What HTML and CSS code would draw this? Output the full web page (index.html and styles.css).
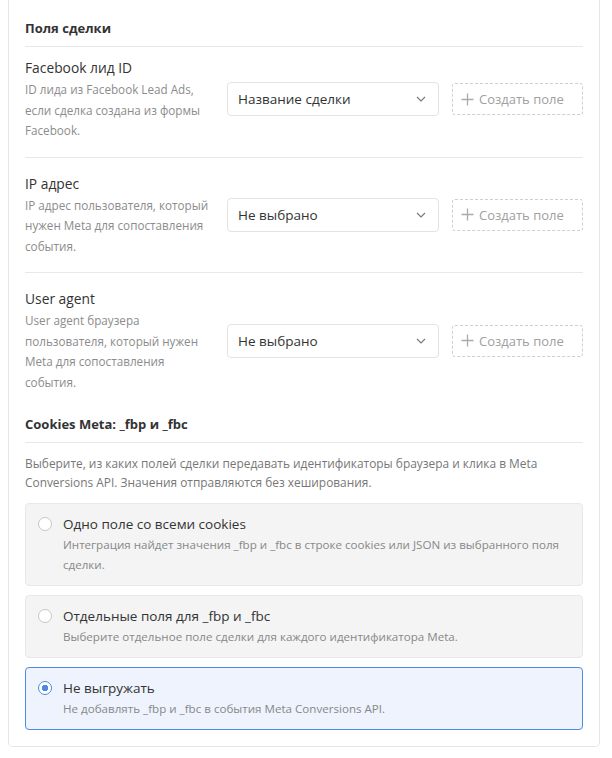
FILE: index.html
```html
<!DOCTYPE html>
<html lang="ru">
<head>
    <meta charset="UTF-8">
    <meta name="viewport" content="width=device-width, initial-scale=1.0">
    <title>Поля сделки</title>
    <link rel="stylesheet" href="styles.css">
</head>
<body>
    <div class="card">
        <h2 class="section-title">Поля сделки</h2>

        <div class="field-row">
            <div class="field-info">
                <div class="field-label">Facebook лид ID</div>
                <div class="field-desc">ID лида из Facebook Lead Ads, если сделка создана из формы Facebook.</div>
            </div>
            <div class="select">
                <span>Название сделки</span>
                <svg class="chevron" width="10" height="6" viewBox="0 0 10 6"><path d="M1 1l4 4 4-4" fill="none" stroke="#777" stroke-width="1.1"/></svg>
            </div>
            <button class="create-btn"><svg class="plus" width="13" height="13" viewBox="0 0 13 13"><path d="M6.5 0.5v12M0.5 6.5h12" stroke="#aaa" stroke-width="1.3"/></svg>Создать поле</button>
        </div>

        <div class="field-row">
            <div class="field-info">
                <div class="field-label">IP адрес</div>
                <div class="field-desc">IP адрес пользователя, который нужен Meta для сопоставления события.</div>
            </div>
            <div class="select">
                <span>Не выбрано</span>
                <svg class="chevron" width="10" height="6" viewBox="0 0 10 6"><path d="M1 1l4 4 4-4" fill="none" stroke="#777" stroke-width="1.1"/></svg>
            </div>
            <button class="create-btn"><svg class="plus" width="13" height="13" viewBox="0 0 13 13"><path d="M6.5 0.5v12M0.5 6.5h12" stroke="#aaa" stroke-width="1.3"/></svg>Создать поле</button>
        </div>

        <div class="field-row last">
            <div class="field-info">
                <div class="field-label">User agent</div>
                <div class="field-desc">User agent браузера пользователя, который нужен Meta для сопоставления события.</div>
            </div>
            <div class="select">
                <span>Не выбрано</span>
                <svg class="chevron" width="10" height="6" viewBox="0 0 10 6"><path d="M1 1l4 4 4-4" fill="none" stroke="#777" stroke-width="1.1"/></svg>
            </div>
            <button class="create-btn"><svg class="plus" width="13" height="13" viewBox="0 0 13 13"><path d="M6.5 0.5v12M0.5 6.5h12" stroke="#aaa" stroke-width="1.3"/></svg>Создать поле</button>
        </div>

        <h2 class="section-title cookies-title">Cookies Meta: _fbp и _fbc</h2>
        <p class="section-note">Выберите, из каких полей сделки передавать идентификаторы браузера и клика в Meta Conversions API. Значения отправляются без хеширования.</p>

        <div class="options">
            <label class="option">
                <span class="radio"></span>
                <span class="option-text">
                    <span class="option-title">Одно поле со всеми cookies</span>
                    <span class="option-desc">Интеграция найдет значения _fbp и _fbc в строке cookies или JSON из выбранного поля сделки.</span>
                </span>
            </label>
            <label class="option">
                <span class="radio"></span>
                <span class="option-text">
                    <span class="option-title">Отдельные поля для _fbp и _fbc</span>
                    <span class="option-desc">Выберите отдельное поле сделки для каждого идентификатора Meta.</span>
                </span>
            </label>
            <label class="option selected">
                <span class="radio"></span>
                <span class="option-text">
                    <span class="option-title">Не выгружать</span>
                    <span class="option-desc">Не добавлять _fbp и _fbc в события Meta Conversions API.</span>
                </span>
            </label>
        </div>
    </div>
</body>
</html>
```

FILE: styles.css
```css
* {
    margin: 0;
    padding: 0;
    box-sizing: border-box;
}

body {
    font-family: 'Open Sans', 'Noto Sans', sans-serif;
    background: #fff;
    color: #333;
}

.card {
    margin: 0 12px 0 8px;
    border: 1px solid #e6e6e6;
    border-top: none;
    border-radius: 0 0 5px 5px;
    padding: 18px 16px 16px;
}

.section-title {
    font-size: 13px;
    font-weight: 700;
    color: #333;
    line-height: 20px;
    padding-bottom: 8px;
    border-bottom: 1px solid #e8e8e8;
}

.field-row {
    display: grid;
    grid-template-columns: 189px 212px 131px;
    column-gap: 13px;
    align-items: center;
    padding: 11px 0 16px;
    border-bottom: 1px solid #e8e8e8;
}

.field-row + .field-row {
    padding-top: 16px;
}

.field-row.last {
    border-bottom: none;
    padding-bottom: 12px;
}

.field-label {
    font-size: 13.8px;
    line-height: 20px;
    color: #333;
}

.field-desc {
    font-size: 11.7px;
    line-height: 20.5px;
    color: #8c8c8c;
    margin-top: 1px;
}

.select {
    display: flex;
    align-items: center;
    justify-content: space-between;
    height: 34px;
    padding: 0 10px;
    border: 1px solid #e3e3e3;
    border-radius: 4px;
    background: #fff;
    font-size: 13.5px;
    color: #333;
}

.chevron {
    margin-right: 2px;
}

.create-btn {
    display: flex;
    align-items: center;
    gap: 5px;
    height: 32px;
    border: 1px dashed #cfcfcf;
    border-radius: 3px;
    background: #fff;
    font-family: inherit;
    font-size: 13px;
    color: #a0a0a0;
    padding: 0 8px;
}

.plus {
    flex: none;
}

.cookies-title {
    margin-top: 10px;
}

.section-note {
    font-size: 11.9px;
    line-height: 19px;
    color: #777;
    margin-top: 11px;
}

.options {
    display: flex;
    flex-direction: column;
    gap: 9px;
    margin-top: 11px;
}

.option {
    display: flex;
    align-items: flex-start;
    gap: 11px;
    padding: 10px 12px;
    background: #f4f4f4;
    border: 1px solid #e8e8e8;
    border-radius: 4px;
}

.option.selected {
    background: #eef3fd;
    border-color: #4d8ae6;
}

.radio {
    flex: none;
    width: 14px;
    height: 14px;
    margin-top: 3px;
    border: 1px solid #c6c6c6;
    border-radius: 50%;
    background: #fff;
}

.option.selected .radio {
    border-color: #4d8ae6;
    background: radial-gradient(circle, #4d8ae6 0 3px, #fff 3.5px);
}

.option-text {
    display: flex;
    flex-direction: column;
}

.option-title {
    font-size: 13.5px;
    line-height: 20px;
    color: #333;
}

.option-desc {
    font-size: 11.6px;
    line-height: 20px;
    color: #888;
    margin-top: 1px;
}
```
